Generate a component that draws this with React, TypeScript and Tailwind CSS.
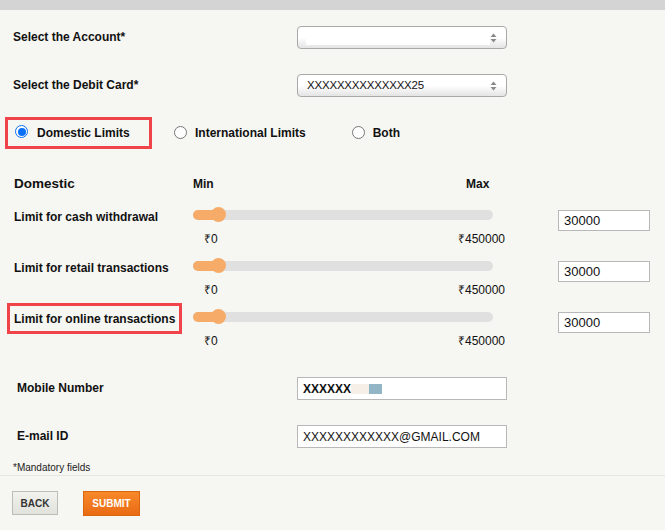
import React from "react";

function Arrows() {
  return (
    <svg width="7" height="10" viewBox="0 0 7 10" className="shrink-0">
      <path d="M3.5 0.5 L6.5 4 L0.5 4 Z" fill="#8a8a8a" />
      <path d="M3.5 9.5 L6.5 6 L0.5 6 Z" fill="#8a8a8a" />
    </svg>
  );
}

function Select({ text, blank }: { text?: string; blank?: boolean }) {
  return (
    <div className="relative w-[210px] h-[23px] rounded-[4px] border border-[#a9a9a9] bg-gradient-to-b from-white via-white to-[#e4e4e4] flex items-center pl-[9px] pr-[9px]">
      {blank ? (
        <div className="w-[185px] h-[17px] bg-white -ml-[1px] mb-[2px]" />
      ) : (
        <span className="text-[11.5px] text-[#111] tracking-[-0.2px] mt-[1px]">{text}</span>
      )}
      <div className="ml-auto">
        <Arrows />
      </div>
    </div>
  );
}

function Radio({ checked }: { checked?: boolean }) {
  return checked ? (
    <span className="w-[13px] h-[13px] rounded-full border-[1.5px] border-[#0b6ff7] bg-white flex items-center justify-center shrink-0">
      <span className="block w-[8px] h-[8px] rounded-full bg-[#0b6ff7]" />
    </span>
  ) : (
    <span className="block w-[13px] h-[13px] rounded-full border border-[#767676] bg-white shrink-0" />
  );
}

function SliderRow({ label, boxed }: { label: string; boxed?: boolean }) {
  return (
    <div className="flex h-[51px]">
      <div className="w-[193px]">
        {boxed ? (
          <div className="ml-[7px] -mt-[4px] w-[175px] h-[31px] border-[3px] border-[#f1444a] pl-[4px] flex items-center">
            <span className="text-[12px] font-bold leading-[14px] mt-[1px]">{label}</span>
          </div>
        ) : (
          <div className="pl-[14px] mt-[5px] text-[12px] font-bold leading-[14px]">{label}</div>
        )}
      </div>
      <div className="w-[365px]">
        <div className="relative mt-[5px] w-[300px] h-[10px] rounded-full bg-[#e0e0e0]">
          <div className="absolute left-0 top-0 w-[26px] h-full rounded-full bg-[#f6ac68]" />
          <div className="absolute left-[18px] -top-[3px] w-[15px] h-[15px] rounded-full bg-[#f6ac68]" />
        </div>
        <div className="mt-[12px] w-[312px] flex justify-between text-[12px] leading-[14px]">
          <span className="pl-[11px]">₹0</span>
          <span>₹450000</span>
        </div>
      </div>
      <div className="mt-[5px] w-[92px] h-[21px] border border-[#b8b8b8] bg-white flex items-center pl-[5px] text-[13px]">
        30000
      </div>
    </div>
  );
}

export default function App() {
  return (
    <div className="w-[665px] h-[530px] overflow-hidden bg-[#f6f6f2] text-[#111] font-['Liberation_Sans',Arial,sans-serif]">
      <div className="h-[10px] bg-[#d4d4d4]" />

      <div className="mt-[16px] flex items-center h-[23px]">
        <div className="w-[297px] pl-[13px] text-[12px] font-bold -mt-[1px]">Select the Account*</div>
        <Select blank />
      </div>

      <div className="mt-[25px] flex items-center h-[23px]">
        <div className="w-[297px] pl-[13px] text-[12px] font-bold -mt-[1px]">Select the Debit Card*</div>
        <Select text="XXXXXXXXXXXXXX25" />
      </div>

      <div className="mt-[20px] flex items-center h-[32px]">
        <div className="ml-[5px] w-[147px] h-[32px] border-[3px] border-[#f1444a] flex items-center pl-[7px]">
          <span className="-mt-[3px]">
            <Radio checked />
          </span>
          <span className="ml-[9px] text-[12px] font-bold -mt-[1px]">Domestic Limits</span>
        </div>
        <div className="ml-[22px] flex items-center">
          <span className="-mt-[2px]">
            <Radio />
          </span>
          <span className="ml-[8px] text-[12px] font-bold -mt-[1px]">International Limits</span>
        </div>
        <div className="ml-[46px] flex items-center">
          <span className="-mt-[2px]">
            <Radio />
          </span>
          <span className="ml-[8px] text-[12px] font-bold -mt-[1px]">Both</span>
        </div>
      </div>

      <div className="mt-[27px] flex items-center h-[16px]">
        <div className="w-[193px] pl-[14px] text-[13.5px] font-bold">Domestic</div>
        <div className="w-[273px] text-[12px] font-bold">Min</div>
        <div className="text-[12px] font-bold">Max</div>
      </div>

      <div className="mt-[13px]">
        <SliderRow label="Limit for cash withdrawal" />
        <SliderRow label="Limit for retail transactions" />
        <SliderRow label="Limit for online transactions" boxed />
      </div>

      <div className="mt-[19px] flex items-center h-[23px]">
        <div className="w-[297px] pl-[17px] text-[12px] font-bold -mt-[1px]">Mobile Number</div>
        <div className="w-[210px] h-[23px] border border-[#b8b8b8] bg-white flex items-center pl-[5px]">
          <span className="text-[12px] font-bold">XXXXXX</span>
          <span className="block w-[18px] h-[10px] bg-[#f5efe8]" />
          <span className="block w-[13px] h-[10px] bg-[#93b6c7]" />
        </div>
      </div>

      <div className="mt-[25px] flex items-center h-[23px]">
        <div className="w-[297px] pl-[17px] text-[12px] font-bold -mt-[1px]">E-mail ID</div>
        <div className="w-[210px] h-[23px] border border-[#b8b8b8] bg-white flex items-center pl-[5px] text-[12px]">
          XXXXXXXXXXXX@GMAIL.COM
        </div>
      </div>

      <div className="mt-[14px] pl-[13px] text-[10px] leading-[12px] text-[#222]">*Mandatory fields</div>

      <div className="mt-[1px] h-px bg-[#e5e5e1]" />

      <div className="mt-[15px] flex items-start">
        <button className="ml-[12px] w-[46px] h-[24px] border border-[#bdbdb8] bg-gradient-to-b from-[#f2f2ee] to-[#e2e2dc] text-[10px] font-bold text-[#333] flex items-center justify-center">
          BACK
        </button>
        <button className="ml-[25px] w-[57px] h-[25px] border border-[#d9650f] bg-gradient-to-b from-[#f7892a] to-[#ea6a12] text-[10px] font-bold text-white flex items-center justify-center">
          SUBMIT
        </button>
      </div>
    </div>
  );
}
